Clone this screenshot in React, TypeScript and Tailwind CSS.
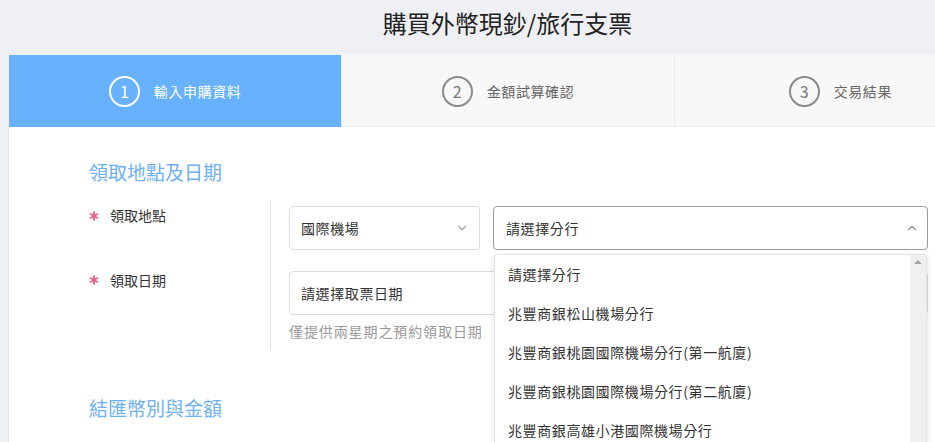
import { ChevronDown, ChevronUp } from "lucide-react";

const steps = [
  { no: 1, label: "輸入申購資料", active: true },
  { no: 2, label: "金額試算確認", active: false },
  { no: 3, label: "交易結果", active: false },
];

const branches = [
  "請選擇分行",
  "兆豐商銀松山機場分行",
  "兆豐商銀桃園國際機場分行(第一航廈)",
  "兆豐商銀桃園國際機場分行(第二航廈)",
  "兆豐商銀高雄小港國際機場分行",
];

function Star() {
  return (
    <svg viewBox="0 0 10 10" className="h-[10px] w-[10px]" stroke="#f06290" strokeWidth={2}>
      <line x1="5" y1="0.5" x2="5" y2="9.5" />
      <line x1="1.1" y1="2.75" x2="8.9" y2="7.25" />
      <line x1="1.1" y1="7.25" x2="8.9" y2="2.75" />
    </svg>
  );
}

export default function App() {
  return (
    <div className="h-[442px] w-[935px] overflow-hidden bg-[#eff0f4] font-['Microsoft_JhengHei','Noto_Sans_CJK_TC',sans-serif] text-[#333]">
      <div className="ml-[9px] w-[997px]">
        {/* Title */}
        <h1 className="flex h-[55px] items-center justify-center pb-[10px] text-[24px] text-[#222]">
          購買外幣現鈔/旅行支票
        </h1>

        {/* Steps */}
        <div className="grid h-[72px] grid-cols-3 bg-[#f8f8f8]">
          {steps.map((s) => (
            <div
              key={s.no}
              className={`flex items-center justify-center gap-[14px] ${
                s.active
                  ? "bg-[#68b1fe] text-white"
                  : "border-l border-[#e9e9e9] text-[#666]"
              }`}
            >
              <div
                className={`flex h-[31px] w-[31px] items-center justify-center rounded-full border-2 text-[16px] ${
                  s.active ? "border-white text-white" : "border-[#8a8a8a] text-[#777]"
                }`}
              >
                {s.no}
              </div>
              <span className="text-[14px] tracking-[0.6px]">{s.label}</span>
            </div>
          ))}
        </div>

        {/* Card */}
        <div className="bg-white pl-[80px] pt-[33px] shadow-[0_0_2px_rgba(0,0,0,0.12)]">
          <h2 className="text-[19px] leading-[24px] text-[#6cb0f6]">領取地點及日期</h2>

          <div className="mt-[16px] flex">
            <div className="w-[181px] shrink-0">
              <div className="flex h-[30px] items-center gap-[11px] pt-[1px] text-[14px]">
                <Star />
                <span>領取地點</span>
              </div>
              <div className="mt-[35px] flex h-[30px] items-center gap-[11px] text-[14px]">
                <Star />
                <span>領取日期</span>
              </div>
            </div>

            <div className="border-l border-[#e6e6e6] pb-[8px] pl-[18px] pt-[6px]">
              <div className="flex gap-[13px]">
                <div className="flex h-[44px] w-[191px] items-center justify-between rounded-[4px] border border-[#dcdcdc] pl-[11px] pr-[10px] text-[14px] tracking-[0.6px]">
                  <span>國際機場</span>
                  <ChevronDown className="h-[14px] w-[14px] text-[#aaa]" strokeWidth={2.5} />
                </div>
                <div className="relative">
                  <div className="flex h-[44px] w-[435px] items-center justify-between rounded-[4px] border border-[#9a9a9a] pl-[12px] pr-[8px] text-[14px] tracking-[0.6px]">
                    <span>請選擇分行</span>
                    <ChevronUp className="h-[14px] w-[14px] text-[#999]" strokeWidth={2.5} />
                  </div>
                  {/* Open list */}
                  <div className="absolute left-[1px] top-[48px] z-10 flex h-[200px] w-[433px] rounded-[3px] border border-[#e4e4e4] bg-white shadow-[0_2px_6px_rgba(0,0,0,0.12)]">
                    <ul className="flex-1 text-[14px] tracking-[0.6px]">
                      {branches.map((b) => (
                        <li key={b} className="flex h-[39px] items-center pl-[13px]">
                          {b}
                        </li>
                      ))}
                    </ul>
                    <div className="flex w-[16px] flex-col items-center justify-between bg-[#f0f0f0] py-[5px]">
                      <span className="h-0 w-0 border-x-[4px] border-b-[4px] border-x-transparent border-b-[#a3a3a3]" />
                      <span className="h-0 w-0 border-x-[4px] border-t-[4px] border-x-transparent border-t-[#a3a3a3]" />
                    </div>
                  </div>
                </div>
              </div>

              <div className="mt-[21px] flex h-[44px] w-[639px] items-center rounded-[4px] border border-[#dcdcdc] pl-[11px] text-[14px] tracking-[0.6px]">
                請選擇取票日期
              </div>
              <p className="mt-[6px] text-[14px] tracking-[0.9px] text-[#999]">僅提供兩星期之預約領取日期</p>
            </div>
          </div>

          <h2 className="mt-[46px] pb-[40px] text-[19px] leading-[24px] text-[#6cb0f6]">
            結匯幣別與金額
          </h2>
        </div>
      </div>
    </div>
  );
}
